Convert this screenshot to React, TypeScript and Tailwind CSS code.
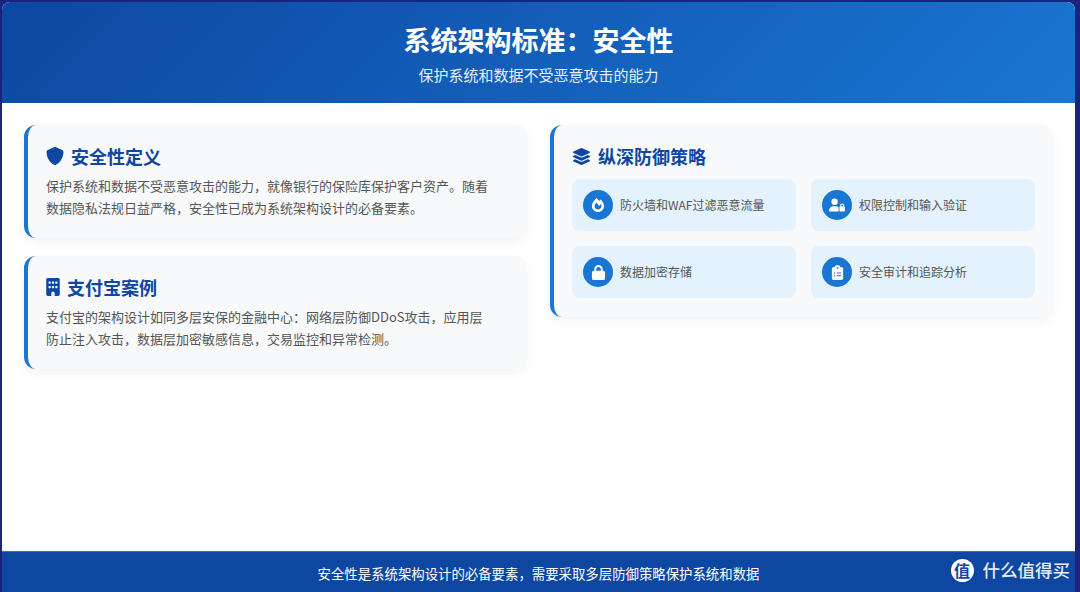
import { FaShield, FaBuilding, FaLayerGroup, FaUserLock, FaLock, FaClipboardList } from "react-icons/fa6";
import { FaFireAlt } from "react-icons/fa";
import type { ReactNode } from "react";

const strategies = [
  { icon: <FaFireAlt className="text-[14px]" />, label: "防火墙和WAF过滤恶意流量" },
  { icon: <FaUserLock className="text-[16px]" />, label: "权限控制和输入验证" },
  { icon: <FaLock className="text-[15px]" />, label: "数据加密存储" },
  { icon: <FaClipboardList className="text-[15px]" />, label: "安全审计和追踪分析" },
];

function Card({ icon, title, children }: { icon: ReactNode; title: string; children: ReactNode }) {
  return (
    <div className="rounded-xl border-l-4 border-[#1976d2] bg-[#f8f9fa] pt-[18px] pb-[19px] pl-[18px] pr-[18px] shadow-[0_4px_12px_rgba(0,0,0,0.05)]">
      <h2 className="flex h-[26px] items-center gap-[7px] text-[18px] font-bold leading-[26px] text-[#0d47a1]">
        {icon}
        {title}
      </h2>
      {children}
    </div>
  );
}

export default function App() {
  return (
    <div
      className="relative flex h-[592px] w-full flex-col overflow-hidden bg-[#1a237e] pt-[2px] pl-[2px] pr-[5px]"
      style={{ fontFamily: '"Noto Sans CJK SC", "Noto Sans", sans-serif' }}
    >
      <div className="flex min-h-0 flex-1 flex-col overflow-hidden rounded-t-lg bg-white">
        {/* Header */}
        <div className="flex h-[101px] shrink-0 flex-col items-center bg-[linear-gradient(135deg,#0d47a1,#1976d2)] pt-[18px] text-white">
          <h1 className="text-[27px] font-bold leading-[40px]">系统架构标准：安全性</h1>
          <p className="mt-[4px] text-[15px] leading-[22px] opacity-90">保护系统和数据不受恶意攻击的能力</p>
        </div>

        {/* Content */}
        <div className="grid flex-1 grid-cols-[503px_503px] items-start gap-x-[23px] px-[22px] pt-[22px]">
          <div className="flex flex-col gap-[18px]">
            <Card icon={<FaShield className="text-[18px]" />} title="安全性定义">
              <p className="mt-[6px] pr-[18px] text-[13px] leading-[22px] text-[#555]">
                保护系统和数据不受恶意攻击的能力，就像银行的保险库保护客户资产。随着数据隐私法规日益严格，安全性已成为系统架构设计的必备要素。
              </p>
            </Card>
            <Card icon={<FaBuilding className="h-[18px] w-[14px]" />} title="支付宝案例">
              <p className="mt-[6px] pr-[18px] text-[13px] leading-[22px] text-[#555]">
                支付宝的架构设计如同多层安保的金融中心：网络层防御DDoS攻击，应用层防止注入攻击，数据层加密敏感信息，交易监控和异常检测。
              </p>
            </Card>
          </div>

          <Card icon={<FaLayerGroup className="h-[19px] w-[19px]" />} title="纵深防御策略">
            <div className="mt-[10px] grid grid-cols-2 gap-[15px]">
              {strategies.map((item) => (
                <div key={item.label} className="flex h-[52px] items-center gap-[7px] rounded-lg bg-[#e3f2fd] px-[11px]">
                  <span className="flex h-[30px] w-[30px] shrink-0 items-center justify-center rounded-full bg-[#1976d2] text-white">
                    {item.icon}
                  </span>
                  <span className="text-[12px] text-[#555]">{item.label}</span>
                </div>
              ))}
            </div>
          </Card>
        </div>

        {/* Footer */}
        <div className="flex h-[41px] shrink-0 items-center justify-center border-t border-[#3f6db5] bg-[#0d47a1] pt-[3px] text-[13.4px] text-white">
          安全性是系统架构设计的必备要素，需要采取多层防御策略保护系统和数据
        </div>
      </div>

      {/* Watermark */}
      <div className="absolute bottom-[10px] right-[10px] flex items-center gap-[9px] text-white">
        <span className="flex h-[23px] w-[23px] items-center justify-center rounded-full bg-white text-[16px] font-bold leading-none text-[#0d47a1]">
          值
        </span>
        <span className="text-[17.5px] font-medium leading-[24px] opacity-90">什么值得买</span>
      </div>
    </div>
  );
}
